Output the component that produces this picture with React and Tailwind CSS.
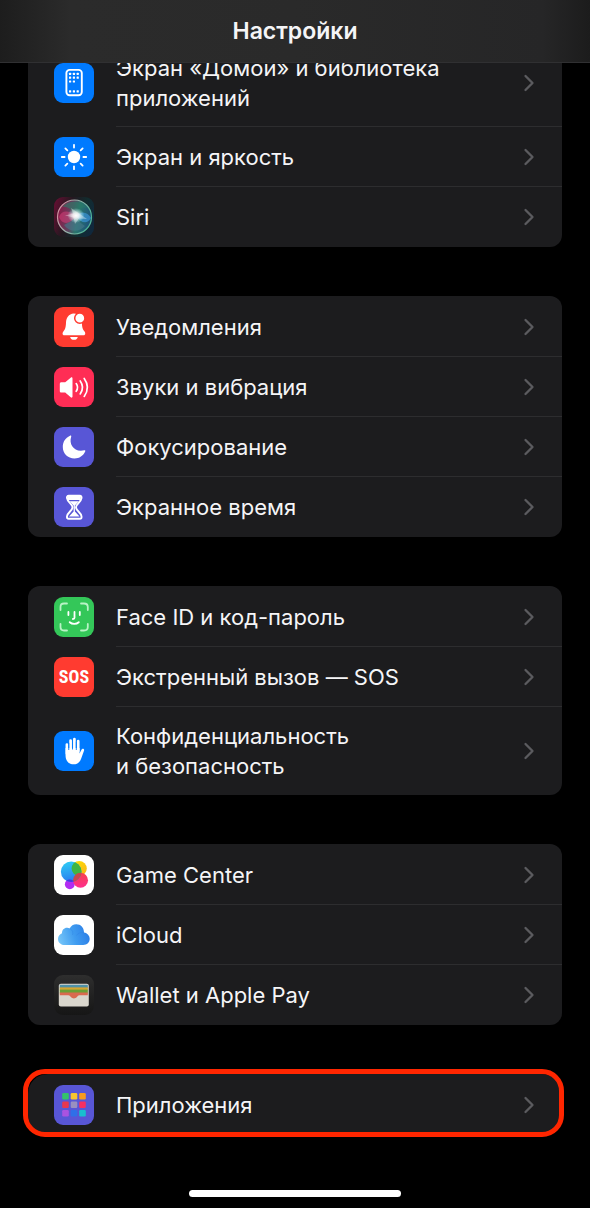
import React from 'react';
import { ChevronRight } from 'lucide-react';

// ── Icons ─────────────────────────────────────────────────────────────────────
function Tile({ className, children }) {
  return (
    <span className={`flex size-10 shrink-0 items-center justify-center overflow-hidden rounded-[9px] ${className}`}>
      {children}
    </span>
  );
}

function Glyph({ children }) {
  return (
    <svg className="size-10" viewBox="0 0 40 40" fill="none" aria-hidden="true">
      {children}
    </svg>
  );
}

const PHONE_DOTS = [
  [15, 9.8], [18.8, 9.8], [22.6, 9.8],
  [15, 13.6], [18.8, 13.6], [22.6, 13.6],
  [15, 17.4], [18.8, 17.4],
  [15, 27.2], [18.8, 27.2], [22.6, 27.2],
];

function HomeScreenIcon() {
  return (
    <Tile className="bg-[#007aff]">
      <Glyph>
        <rect x="12.4" y="6.9" width="15.4" height="25.4" rx="3.2" stroke="#fff" strokeWidth="1.9" />
        {PHONE_DOTS.map(([x, y]) => (
          <rect key={`${x}-${y}`} x={x} y={y} width="2.2" height="2.2" rx="0.5" fill="#fff" />
        ))}
      </Glyph>
    </Tile>
  );
}

function BrightnessIcon() {
  return (
    <Tile className="bg-[#007aff]">
      <Glyph>
        <circle cx="20" cy="20" r="6.2" fill="#fff" />
        {[0, 45, 90, 135, 180, 225, 270, 315].map(angle => (
          <path key={angle} d="M20 7.8V10.6" stroke="#fff" strokeWidth="1.8" strokeLinecap="round"
            transform={`rotate(${angle} 20 20)`} />
        ))}
      </Glyph>
    </Tile>
  );
}

function SiriIcon() {
  return (
    <Tile className="bg-[#1b1b1f]">
      <Glyph>
        <defs>
          <linearGradient id="siri-bg" x1="0" y1="0.3" x2="1" y2="0.6">
            <stop offset="0" stopColor="#5e1030" />
            <stop offset="0.35" stopColor="#241820" />
            <stop offset="0.7" stopColor="#122c2e" />
            <stop offset="1" stopColor="#10283c" />
          </linearGradient>
          <linearGradient id="siri-orb" x1="0" y1="0.4" x2="1" y2="0.6">
            <stop offset="0" stopColor="#8e1746" />
            <stop offset="0.4" stopColor="#5c4660" />
            <stop offset="0.6" stopColor="#2a766c" />
            <stop offset="1" stopColor="#1c4f7c" />
          </linearGradient>
          <linearGradient id="siri-ring" x1="0" y1="0" x2="1" y2="0.4">
            <stop offset="0" stopColor="#d9889c" />
            <stop offset="0.5" stopColor="#9fb0ac" />
            <stop offset="1" stopColor="#4fb295" />
          </linearGradient>
          <radialGradient id="siri-glow">
            <stop offset="0" stopColor="#fff" />
            <stop offset="0.35" stopColor="#fff" stopOpacity="0.8" />
            <stop offset="1" stopColor="#bff" stopOpacity="0" />
          </radialGradient>
        </defs>
        <rect width="40" height="40" fill="url(#siri-bg)" />
        <circle cx="20.5" cy="20" r="17" fill="url(#siri-orb)" stroke="url(#siri-ring)" strokeWidth="1.2" />
        <path d="M8 10C14 3 27 3 33 11C28 9 24 13 22 19C18 13 14 9 8 10Z" fill="#2a7c68" opacity="0.6" />
        <path d="M5 20C8 12 16 14 22 19C16 28 8 28 5 20Z" fill="#e2407e" opacity="0.5" />
        <path d="M22 19C27 13 34 15 37 21C33 28 27 26 22 19Z" fill="#3f9ee8" opacity="0.6" />
        <path d="M10 28C15 25 19 24 22 20C25 25 28 27 31 29C25 36 15 35 10 28Z" fill="#47788c" opacity="0.6" />
        <ellipse cx="22" cy="18.5" rx="8.5" ry="7.5" fill="url(#siri-glow)" />
        <path d="M17 11L23 15L33 22L25 21.5L21 27L19.5 20.5L11 18.5L19 16.5Z" fill="#fff" opacity="0.35" />
      </Glyph>
    </Tile>
  );
}

function BellIcon() {
  return (
    <Tile className="bg-[#ff3b30]">
      <Glyph>
        <path d="M19.8 6.6C14.6 7 12.2 10.8 12 15.8C11.8 20.5 11.2 22.4 9.5 24.3C8.2 25.9 8.2 28.3 10.2 28.3H29.6C31.6 28.3 31.7 25.9 30.4 24.3C28.6 22.2 28 20.3 27.9 15.8C27.7 10.6 25 6.9 19.8 6.6Z" fill="#fff" />
        <path d="M16.1 29.9H23.8C23.3 31.8 22 32.8 20 32.8C18 32.8 16.6 31.8 16.1 29.9Z" fill="#fff" />
        <circle cx="25.8" cy="11.2" r="5.1" fill="#fff" stroke="#ff3b30" strokeWidth="1.5" />
      </Glyph>
    </Tile>
  );
}

function SoundIcon() {
  return (
    <Tile className="bg-[#ff2d55]">
      <Glyph>
        <path d="M7.5 15.2H11.2L16.7 10.7C17.6 10 18.5 10.4 18.5 11.5V29.5C18.5 30.6 17.6 31 16.7 30.3L11.2 25.6H7.5C6.4 25.6 5.8 25 5.8 23.9V16.9C5.8 15.8 6.4 15.2 7.5 15.2Z" fill="#fff" />
        <g stroke="#fff" strokeWidth="1.7" strokeLinecap="round">
          <path d="M22.2 16.6C23.9 19 23.9 21.9 22.2 24.3" />
          <path d="M26.2 14C29.1 18 29.1 22.9 26.2 26.9" />
          <path d="M30.2 11.5C34.3 17.2 34.3 23.7 30.2 29.4" />
        </g>
      </Glyph>
    </Tile>
  );
}

function MoonIcon() {
  return (
    <Tile className="bg-[#5856d6]">
      <Glyph>
        <path d="M16 8.7C16.8 8.3 17.5 8.9 17.2 9.7C14.6 17.3 20.3 25.6 30.2 23.3C31.1 23.1 31.6 23.7 31.2 24.5C29.2 28.9 25.4 31.4 20.5 31.4C13.7 31.4 8.8 26.6 8.8 20C8.8 15 11.3 10.9 16 8.7Z" fill="#fff" />
      </Glyph>
    </Tile>
  );
}

function HourglassIcon() {
  return (
    <Tile className="bg-[#5856d6]">
      <Glyph>
        <path d="M14.8 8.8H25.7C27.3 8.8 27.7 9.7 27.5 11.2C27 15.3 22 17 22 20.3C22 23.6 27 25.3 27.5 29.4C27.7 31 27.3 31.8 25.7 31.8H14.8C13.2 31.8 12.8 31 13 29.4C13.5 25.3 18.5 23.6 18.5 20.3C18.5 17 13.5 15.3 13 11.2C12.8 9.7 13.2 8.8 14.8 8.8Z" stroke="#fff" strokeWidth="1.9" />
        <path d="M13.5 9H27L26.5 13H14ZM15.7 14.3H24.8L20.9 18.5V24.5L25.5 29.5H15L19.6 24.5V18.5Z" fill="#fff" />
      </Glyph>
    </Tile>
  );
}

function FaceIdIcon() {
  return (
    <Tile className="bg-[#34c759]">
      <Glyph>
        <g stroke="#b9f3c6" strokeWidth="1.8" strokeLinecap="round">
          <path d="M6.5 13V10C6.5 7.8 7.8 6.5 10 6.5H13" />
          <path d="M27 6.5H30C32.2 6.5 33.8 7.8 33.8 10V13" />
          <path d="M33.8 27V30C33.8 32.2 32.2 33.5 30 33.5H27" />
          <path d="M13 33.5H10C7.8 33.5 6.5 32.2 6.5 30V27" />
        </g>
        <g stroke="#fff" strokeWidth="1.8" strokeLinecap="round">
          <path d="M14.4 15V18" />
          <path d="M25.8 15V18" />
          <path d="M20.5 15V20.8C20.5 21.6 20 22 18.9 22" />
          <path d="M15.7 25.2C18.2 27.4 22.3 27.4 24.8 25.2" />
        </g>
      </Glyph>
    </Tile>
  );
}

function SosIcon() {
  return (
    <Tile className="bg-[#ff3b30]">
      <span className="font-['Liberation_Sans_Narrow','Roboto_Condensed',Roboto,sans-serif] text-[18px] leading-none font-bold text-white">
        SOS
      </span>
    </Tile>
  );
}

function HandIcon() {
  return (
    <Tile className="bg-[#007aff]">
      <Glyph>
        <path d="M12.9 22.5V13.5M16.6 20V9.5M20.4 20V8M24.2 20V10.2" stroke="#fff" strokeWidth="2.7" strokeLinecap="round" />
        <path d="M11.55 17H25.55V22.6L27.3 19.1C27.9 17.8 29 17.5 29.7 18C30.3 18.5 30.2 19.2 29.9 20.1L27.3 27.3C25.8 31.4 23.6 33.3 19.7 33.3C14.6 33.3 11.55 29.8 11.55 24.5Z" fill="#fff" />
        <path d="M14.75 12V19M18.5 10.5V18.5M22.3 10.5V19" stroke="#007aff" strokeWidth="0.9" />
      </Glyph>
    </Tile>
  );
}

function GameCenterIcon() {
  return (
    <Tile className="bg-white">
      <Glyph>
        <defs>
          <linearGradient id="gc-blue" x1="0" y1="0" x2="0.2" y2="1">
            <stop offset="0" stopColor="#2fd0f5" />
            <stop offset="1" stopColor="#2b7ff0" />
          </linearGradient>
          <linearGradient id="gc-yellow" x1="0" y1="0" x2="1" y2="1">
            <stop offset="0" stopColor="#ffe600" />
            <stop offset="1" stopColor="#f7b21c" />
          </linearGradient>
          <linearGradient id="gc-pink" x1="0" y1="0" x2="0" y2="1">
            <stop offset="0" stopColor="#f5404d" />
            <stop offset="1" stopColor="#ff2f8f" />
          </linearGradient>
          <clipPath id="gc-clip">
            <circle cx="17.2" cy="16.8" r="10.3" />
          </clipPath>
        </defs>
        <circle cx="15.8" cy="29.3" r="4.9" fill="#b22df2" />
        <circle cx="25.2" cy="13.5" r="7.6" fill="url(#gc-yellow)" />
        <circle cx="26.5" cy="25.2" r="7.5" fill="url(#gc-pink)" />
        <circle cx="17.2" cy="16.8" r="10.3" fill="url(#gc-blue)" />
        <g clipPath="url(#gc-clip)">
          <circle cx="25.2" cy="13.5" r="7.6" fill="#3fb544" />
          <circle cx="26.5" cy="25.2" r="7.5" fill="#c8484e" />
          <circle cx="15.8" cy="29.3" r="4.9" fill="#4a36e0" />
        </g>
      </Glyph>
    </Tile>
  );
}

function CloudIcon() {
  return (
    <Tile className="bg-white">
      <Glyph>
        <defs>
          <linearGradient id="cloud" x1="0" y1="0.6" x2="1" y2="0.4">
            <stop offset="0" stopColor="#74c4f8" />
            <stop offset="0.5" stopColor="#3f9cf0" />
            <stop offset="1" stopColor="#2b7de6" />
          </linearGradient>
        </defs>
        <path d="M10.8 30C6.8 30 4 27.3 4 23.9C4 21.2 5.6 19.1 8 18.2C7.9 14.9 10.3 12.5 13.3 12.7C14.2 12.8 14.9 13 15.6 13.4C17 10.9 19.4 9.3 22.3 9.3C26.8 9.3 29.9 12.7 30 17.4C33.4 18.2 35.7 20.5 35.7 23.8C35.7 27.4 33 30 29.2 30Z" fill="url(#cloud)" />
        <path d="M15.6 13.4C18.5 14.7 19.5 17.5 18.5 20M30 17.4C27 16.9 24 18 22.5 20.5" stroke="#2f83e4" strokeWidth="0.8" opacity="0.5" />
      </Glyph>
    </Tile>
  );
}

function WalletIcon() {
  return (
    <Tile className="bg-linear-to-b from-[#2e2e2e] to-[#161616]">
      <Glyph>
        <defs>
          <clipPath id="wallet">
            <rect x="4.8" y="8.8" width="30" height="22.6" rx="2" />
          </clipPath>
        </defs>
        <g clipPath="url(#wallet)">
          <rect x="4" y="8" width="32" height="24" fill="#d9d6cd" />
          <rect x="5.8" y="9.8" width="28" height="3.4" fill="#4f92a8" />
          <rect x="5.8" y="12.4" width="28" height="3" fill="#d7a52f" />
          <rect x="5.8" y="14.6" width="28" height="3.8" fill="#6a9f35" />
          <path d="M5.8 17.6H33.8V20.3H25.3C24 20.3 23.8 21 23 22C21.5 23.9 18.3 23.9 16.8 22C16 21 15.7 20.3 14.4 20.3H5.8Z" fill="#d9694f" />
        </g>
      </Glyph>
    </Tile>
  );
}

const APP_COLORS = [
  '#34c36a', '#f7c52e', '#f79a1e',
  '#e8384f', '#9a8fc0', '#f62f63',
  '#a953e0', '#2f6fe8', '#19bfcf',
];

function AppsIcon() {
  return (
    <Tile className="bg-[#5856d6]">
      <Glyph>
        {APP_COLORS.map((color, i) => (
          <rect key={color} x={8.2 + (i % 3) * 8.5} y={8 + Math.floor(i / 3) * 8.5}
            width="6.6" height="6.6" rx="1.3" fill={color} />
        ))}
      </Glyph>
    </Tile>
  );
}

// ── Data ──────────────────────────────────────────────────────────────────────
const GROUPS = [
  [
    { id: 'home', lines: ['Экран «Домой» и библиотека', 'приложений'], icon: <HomeScreenIcon /> },
    { id: 'display', lines: ['Экран и яркость'], icon: <BrightnessIcon /> },
    { id: 'siri', lines: ['Siri'], icon: <SiriIcon /> },
  ],
  [
    { id: 'notifications', lines: ['Уведомления'], icon: <BellIcon /> },
    { id: 'sounds', lines: ['Звуки и вибрация'], icon: <SoundIcon /> },
    { id: 'focus', lines: ['Фокусирование'], icon: <MoonIcon /> },
    { id: 'screen-time', lines: ['Экранное время'], icon: <HourglassIcon /> },
  ],
  [
    { id: 'face-id', lines: ['Face ID и код-пароль'], icon: <FaceIdIcon /> },
    { id: 'sos', lines: ['Экстренный вызов — SOS'], icon: <SosIcon /> },
    { id: 'privacy', lines: ['Конфиденциальность', 'и безопасность'], icon: <HandIcon /> },
  ],
  [
    { id: 'game-center', lines: ['Game Center'], icon: <GameCenterIcon /> },
    { id: 'icloud', lines: ['iCloud'], icon: <CloudIcon /> },
    { id: 'wallet', lines: ['Wallet и Apple Pay'], icon: <WalletIcon /> },
  ],
  [{ id: 'apps', lines: ['Приложения'], icon: <AppsIcon />, highlighted: true }],
];

// ── Row ───────────────────────────────────────────────────────────────────────
function SettingsRow({ item, last }) {
  return (
    <li>
      <a href={`#${item.id}`} className="flex items-stretch gap-[22px] pl-[26px]">
        <span className="flex items-center">{item.icon}</span>
        <span className={`flex flex-1 items-center justify-between border-b pr-[19px]
                          ${item.lines.length > 1 ? 'min-h-[88px]' : 'min-h-[60px]'}
                          ${last ? 'border-transparent' : 'border-[#2d2d2f]'}`}>
          <span className="text-[22px] leading-[30px]">
            {item.lines.map(line => (
              <span key={line} className="block">{line}</span>
            ))}
          </span>
          <ChevronRight className="size-7 shrink-0 text-[#5b5b5f]" strokeWidth={2} aria-hidden="true" />
        </span>
      </a>
    </li>
  );
}

function SettingsGroup({ items }) {
  const highlighted = items.some(item => item.highlighted);
  return (
    <section className={`relative bg-[#1c1c1e] pt-px ${highlighted ? 'rounded-[20px]' : 'rounded-xl'}`}>
      <ul>
        {items.map((item, i) => (
          <SettingsRow key={item.id} item={item} last={i === items.length - 1} />
        ))}
      </ul>
      {highlighted && (
        <div className="pointer-events-none absolute -top-[5px] -right-[2px] -bottom-[2px] -left-[5px] rounded-[22px] border-5 border-[#ff2600]" />
      )}
    </section>
  );
}

// ── Page ──────────────────────────────────────────────────────────────────────
export default function App() {
  return (
    <div className="flex min-h-screen flex-col bg-black font-[Inter,'Liberation_Sans',sans-serif] text-[#f5f5f7]">
      <header className="fixed inset-x-0 top-0 z-10 flex h-[63px] items-center justify-center border-b border-[#303032] bg-[linear-gradient(to_right,#1d1d1d,#2b2b2b_12%,#2a2a2a_50%,#262627_92%,#1c1c1c)]">
        <h1 className="text-[23px] leading-[30px] font-semibold">Настройки</h1>
      </header>

      <main className="flex flex-col gap-[49px] px-7 pt-[38px]">
        {GROUPS.map(items => (
          <SettingsGroup key={items[0].id} items={items} />
        ))}
      </main>

      <footer className="mt-auto flex justify-center pt-10 pb-[11px]">
        <div className="h-[7px] w-[212px] rounded-full bg-white" />
      </footer>
    </div>
  );
}
